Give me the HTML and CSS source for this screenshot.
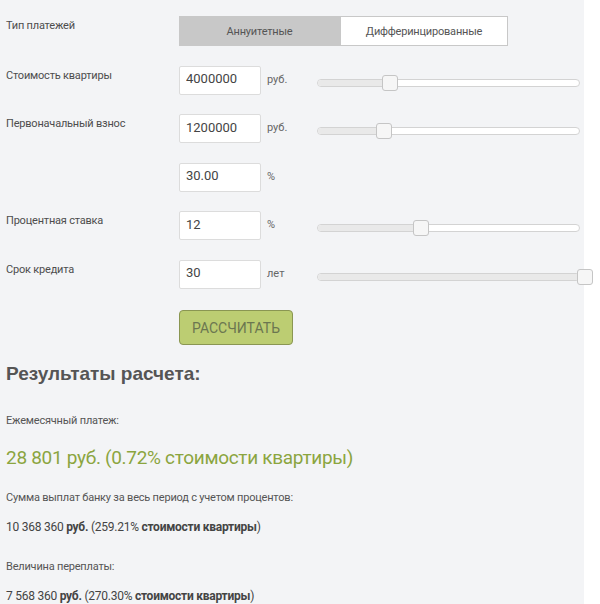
FILE: index.html
```html
<!DOCTYPE html>
<html lang="ru">
<head>
    <meta charset="UTF-8">
    <meta name="viewport" content="width=device-width, initial-scale=1.0">
    <title>Ипотечный калькулятор</title>
    <link rel="stylesheet" href="styles.css">
</head>
<body>
    <div class="calc">
        <div class="row">
            <div class="label">Тип платежей</div>
            <div class="toggle">
                <span class="opt active">Аннуитетные</span>
                <span class="opt">Дифферинцированные</span>
            </div>
        </div>

        <div class="row">
            <div class="label">Стоимость квартиры</div>
            <input class="field" type="text" value="4000000">
            <span class="unit">руб.</span>
            <div class="slider"><div class="range" style="width:27.6%"></div><span class="handle" style="left:27.6%"></span></div>
        </div>

        <div class="row">
            <div class="label">Первоначальный взнос</div>
            <input class="field" type="text" value="1200000">
            <span class="unit">руб.</span>
            <div class="slider"><div class="range" style="width:25.3%"></div><span class="handle" style="left:25.3%"></span></div>
        </div>

        <div class="row">
            <div class="label"></div>
            <input class="field" type="text" value="30.00">
            <span class="unit">%</span>
        </div>

        <div class="row">
            <div class="label">Процентная ставка</div>
            <input class="field" type="text" value="12">
            <span class="unit">%</span>
            <div class="slider"><div class="range" style="width:39.3%"></div><span class="handle" style="left:39.3%"></span></div>
        </div>

        <div class="row">
            <div class="label">Срок кредита</div>
            <input class="field" type="text" value="30">
            <span class="unit">лет</span>
            <div class="slider"><div class="range" style="width:100%"></div><span class="handle" style="left:102.3%"></span></div>
        </div>

        <div class="row">
            <div class="label"></div>
            <button class="calc-btn">РАССЧИТАТЬ</button>
        </div>

        <div class="results">
            <h2>Результаты расчета:</h2>
            <p class="caption">Ежемесячный платеж:</p>
            <p class="monthly">28 801 руб. (0.72% стоимости квартиры)</p>
            <p class="caption total">Сумма выплат банку за весь период с учетом процентов:</p>
            <p class="value">10 368 360 <b>руб.</b> (259.21% <b>стоимости квартиры</b>)</p>
            <p class="caption over">Величина переплаты:</p>
            <p class="value">7 568 360 <b>руб.</b> (270.30% <b>стоимости квартиры</b>)</p>
        </div>
    </div>
</body>
</html>
```

FILE: styles.css
```css
body {
    margin: 0;
    background-color: #fff;
    font-family: Roboto, Arial, sans-serif;
    color: #555;
}
.calc {
    width: 578px;
    min-height: 588px;
    padding: 16px 0 0 6px;
    background-color: #f3f4f6;
}
.row {
    display: grid;
    grid-template-columns: 173px 82px 56px 263px;
    align-items: start;
    margin-bottom: 19.5px;
}
.label {
    font-size: 11px;
    line-height: 20px;
    letter-spacing: -0.2px;
    color: #4d4d4d;
}
.toggle {
    grid-column: 2 / 5;
    display: flex;
    width: 329px;
    height: 30px;
}
.opt {
    display: flex;
    align-items: center;
    justify-content: center;
    font-size: 11px;
    letter-spacing: -0.2px;
    color: #555;
    border: 1px solid #c8c8c8;
    background-color: #fff;
}
.opt.active {
    width: 159px;
    background-color: #c8c8c8;
}
.opt:last-child {
    flex: 1;
}
.field {
    box-sizing: border-box;
    width: 82px;
    height: 29px;
    margin: 0;
    padding: 0 6px 3px;
    border: 1px solid #dcdcdc;
    border-radius: 2px;
    background-color: #fff;
    font-family: inherit;
    font-size: 13px;
    color: #444;
}
.unit {
    padding: 4px 0 0 6px;
    font-size: 11px;
    line-height: 20px;
    color: #666;
}
.slider {
    position: relative;
    box-sizing: border-box;
    height: 8px;
    margin-top: 13px;
    border: 1px solid #d3d3d3;
    border-radius: 4px;
    background-color: #fff;
}
.range {
    height: 100%;
    border-radius: 3px 0 0 3px;
    background-color: #e9e9e9;
}
.handle {
    position: absolute;
    top: -5px;
    box-sizing: border-box;
    width: 16px;
    height: 16px;
    margin-left: -8px;
    border: 1px solid #c5c5c5;
    border-radius: 3px;
    background-color: #f6f6f6;
}
.calc-btn {
    grid-column: 2 / 4;
    width: 114px;
    height: 35px;
    margin-top: 2px;
    border: 1px solid #8a9652;
    border-radius: 4px;
    background-color: #bccd72;
    font-family: inherit;
    font-size: 14px;
    color: #6b7650;
}
.results h2 {
    margin: -1.5px 0 0;
    font-family: "Liberation Sans", Arial, sans-serif;
    font-size: 19px;
    line-height: 22px;
    font-weight: bold;
    color: #555;
}
.results p {
    margin: 0;
    font-size: 11px;
    line-height: 14px;
    letter-spacing: -0.2px;
}
.results .caption {
    margin-top: 29px;
    color: #555;
}
.results .total {
    margin-top: 22.5px;
}
.results .over {
    margin-top: 26px;
}
.results .monthly {
    margin-top: 17.5px;
    font-size: 19px;
    line-height: 23px;
    letter-spacing: -0.3px;
    color: #8ba53f;
}
.results .value {
    margin-top: 15px;
    font-size: 12px;
    letter-spacing: -0.25px;
    color: #444;
}
```
